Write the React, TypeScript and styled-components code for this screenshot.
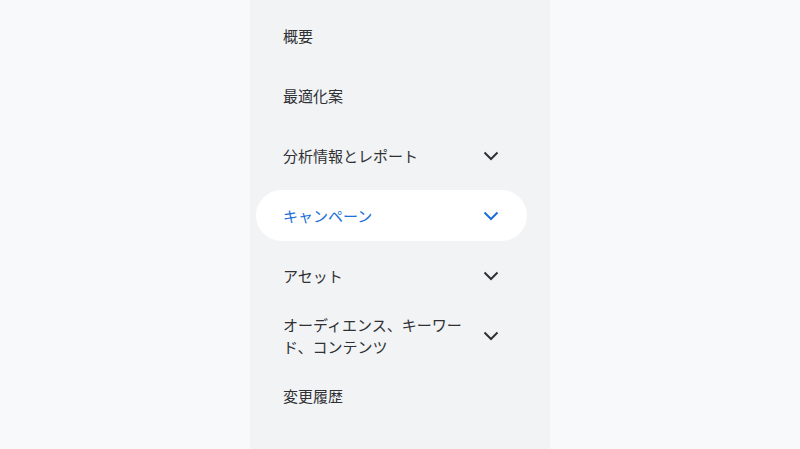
import React from 'react'
import styled, { createGlobalStyle } from 'styled-components'

const Global = createGlobalStyle`
  html, body {
    margin: 0;
    padding: 0;
    background: #f8f9fb;
    font-family: "Noto Sans CJK JP", "Noto Sans", sans-serif;
  }
`

const Page = styled.div`
  display: flex;
  justify-content: center;
  height: 449px;
  overflow: hidden;
`

const Panel = styled.nav`
  width: 300px;
  background: #f1f3f4;
  padding: 10px 23px 0 6px;
  box-sizing: border-box;
  display: flex;
  flex-direction: column;
`

const Item = styled.div<{ $active?: boolean }>`
  display: flex;
  align-items: center;
  justify-content: space-between;
  min-height: 51px;
  margin-bottom: 9px;
  padding: 0 28px 0 27px;
  border-radius: 26px;
  background: ${(p) => (p.$active ? '#ffffff' : 'transparent')};
  color: ${(p) => (p.$active ? '#1a6fd8' : '#303134')};
  font-size: 15px;
  line-height: 22px;
`

const Label = styled.span`
  max-width: 182px;
`

const Chevron = ({ color }: { color: string }) => (
  <svg width="16" height="10" viewBox="0 0 16 10">
    <polyline points="1.5,1.5 8,8 14.5,1.5" fill="none" stroke={color} strokeWidth="2" />
  </svg>
)

const items = [
  { label: '概要' },
  { label: '最適化案' },
  { label: '分析情報とレポート', expand: true },
  { label: 'キャンペーン', expand: true, active: true },
  { label: 'アセット', expand: true },
  { label: 'オーディエンス、キーワード、コンテンツ', expand: true },
  { label: '変更履歴' },
]

export default function App() {
  return (
    <>
      <Global />
      <Page>
        <Panel>
          {items.map((it) => (
            <Item key={it.label} $active={it.active}>
              <Label>{it.label}</Label>
              {it.expand && <Chevron color={it.active ? '#1a6fd8' : '#303134'} />}
            </Item>
          ))}
        </Panel>
      </Page>
    </>
  )
}
